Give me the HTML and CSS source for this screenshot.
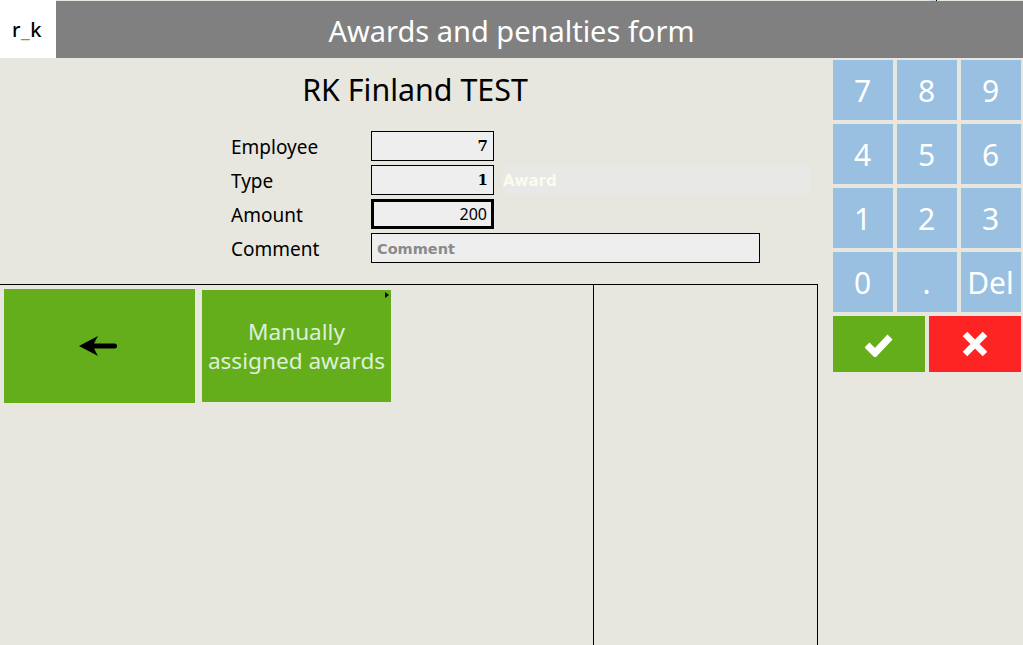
FILE: index.html
```html
<!DOCTYPE html>
<html lang="en">
<head>
<meta charset="utf-8">
<title>Awards and penalties form</title>
<link rel="stylesheet" href="styles.css">
</head>
<body>
<header class="topbar">
  <div class="logo">r<span class="logo-bar">_</span>k</div>
  <h1 class="topbar-title">Awards and penalties form</h1>
  <span class="top-glitch"></span>
</header>
<div class="main">
  <div class="content">
    <h2 class="company">RK Finland TEST</h2>
    <form class="form">
      <label class="form-label">Employee</label>
      <div class="field field-short field-bold">7</div>
      <label class="form-label">Type</label>
      <div class="type-row">
        <div class="field field-short field-bold">1</div>
        <div class="type-name">Award</div>
      </div>
      <label class="form-label">Amount</label>
      <div class="field field-short field-active">200</div>
      <label class="form-label">Comment</label>
      <div class="field field-long">Comment</div>
    </form>
    <div class="panels">
      <div class="panel-left">
        <button type="button" class="tile tile-back" aria-label="Back">
          <svg width="40" height="20" viewBox="0 0 40 20"><path d="M1 10 L20 0 L16 7.5 H36.5 a2.5 2.5 0 0 1 0 5 H16 L20 20 Z" fill="#000"/></svg>
        </button>
        <button type="button" class="tile tile-folder">Manually<br>assigned awards<span class="tile-mark"></span></button>
      </div>
      <div class="panel-right"></div>
    </div>
  </div>
  <aside class="side">
    <div class="keypad">
      <button type="button" class="key">7</button>
      <button type="button" class="key">8</button>
      <button type="button" class="key">9</button>
      <button type="button" class="key">4</button>
      <button type="button" class="key">5</button>
      <button type="button" class="key">6</button>
      <button type="button" class="key">1</button>
      <button type="button" class="key">2</button>
      <button type="button" class="key">3</button>
      <button type="button" class="key">0</button>
      <button type="button" class="key">.</button>
      <button type="button" class="key">Del</button>
    </div>
    <div class="actions">
      <button type="button" class="action action-ok" aria-label="Confirm">
        <svg width="28" height="26" viewBox="1 0 28 26"><path d="M3 14 L11 22 L26 6" fill="none" stroke="#fff" stroke-width="7"/></svg>
      </button>
      <button type="button" class="action action-cancel" aria-label="Cancel">
        <svg width="26" height="26" viewBox="0 0 26 26"><path d="M3 3 L23 23 M23 3 L3 23" fill="none" stroke="#fff" stroke-width="6.5"/></svg>
      </button>
    </div>
  </aside>
</div>
</body>
</html>
```
FILE: styles.css
```css
* { box-sizing: border-box; }
html, body { margin: 0; padding: 0; height: 100%; }
body {
  width: 1023px;
  height: 645px;
  overflow: hidden;
  background: #e7e7df;
  font-family: "Noto Sans", "Open Sans", sans-serif;
  color: #000;
  display: flex;
  flex-direction: column;
}
.topbar { position: relative; display: flex; height: 58px; flex: none; }
.top-glitch {
  position: absolute;
  left: 929px;
  top: 0;
  width: 8px;
  height: 1px;
  background: #c4d8ea;
  border-right: 1px solid #000;
}
.logo {
  width: 56px;
  padding-right: 2px;
  background: #fff;
  font-size: 20px;
  font-weight: 500;
  letter-spacing: 0.5px;
  display: flex;
  align-items: center;
  justify-content: center;
}
.logo-bar { color: #5fae3c; }
.topbar-title {
  flex: 1;
  margin: 1px 0 0;
  padding: 2px 56px 0 0;
  background: #808080;
  color: #fff;
  font-size: 29px;
  font-weight: 400;
  display: flex;
  align-items: center;
  justify-content: center;
}
.main { flex: 1; display: flex; min-height: 0; }
.content { width: 833px; display: flex; flex-direction: column; }
.company {
  margin: 12px 0 0;
  width: 830px;
  height: 40px;
  font-size: 30.4px;
  font-weight: 400;
  line-height: 40px;
  text-align: center;
}
.form {
  margin: 21px 0 0 231px;
  display: grid;
  grid-template-columns: 140px auto;
  grid-auto-rows: 30px;
  row-gap: 4px;
  align-items: center;
  font-size: 19px;
}
.form-label { line-height: 32px; height: 30px; }
.field {
  height: 30px;
  border: 1px solid #000;
  background: #eee;
  font-size: 16px;
  line-height: 28px;
  padding: 0 5px;
  text-align: right;
}
.field-short { width: 123px; }
.field-bold { font-family: "DejaVu Serif", serif; font-weight: 700; font-size: 15px; }
.field-active { border-width: 3px; line-height: 24px; padding: 0 4px; font-family: "Noto Sans", sans-serif; }
.field-long {
  width: 389px;
  text-align: left;
  color: #8a8a8a;
  font-weight: 700;
  font-family: "DejaVu Sans", sans-serif;
  font-size: 14.5px;
  padding-left: 5px;
  line-height: 30px;
}
.type-row { display: flex; gap: 9px; }
.type-name {
  width: 307px;
  height: 30px;
  background: #e8e8e6;
  color: #fbfbef;
  font-family: "DejaVu Sans", sans-serif;
  font-weight: 700;
  font-size: 15px;
  line-height: 33px;
}
.panels {
  margin-top: 21px;
  width: 818px;
  flex: 1;
  border-top: 1px solid #000;
  display: flex;
}
.panel-left {
  width: 594px;
  border-right: 1px solid #000;
  padding: 4px 0 0 4px;
  display: flex;
  align-items: flex-start;
  gap: 7px;
}
.panel-right { flex: 1; border-right: 1px solid #000; }
.tile {
  position: relative;
  border: 0;
  padding: 0;
  background: #65ae1b;
  font-family: inherit;
  display: flex;
  align-items: center;
  justify-content: center;
}
.tile-back { width: 191px; height: 114px; padding-right: 4px; }
.tile-folder {
  display: block;
  width: 189px;
  height: 112px;
  margin-top: 1px;
  color: #ddeedd;
  font-size: 22.6px;
  line-height: 29px;
  text-align: center;
}
.tile-mark {
  position: absolute;
  top: 2px;
  right: 2px;
  border-left: 4px solid #000;
  border-top: 3px solid transparent;
  border-bottom: 3px solid transparent;
}
.side { flex: 1; padding-top: 2px; }
.keypad {
  display: grid;
  grid-template-columns: repeat(3, 60px);
  grid-auto-rows: 60px;
  gap: 4px;
}
.key {
  border: 0;
  padding: 0 1px 0 0;
  background: #99bfe1;
  color: #fff;
  font-family: inherit;
  font-size: 30px;
}
.actions { display: flex; gap: 4px; margin-top: 4px; }
.action {
  width: 92px;
  height: 56px;
  border: 0;
  padding: 0;
  display: flex;
  align-items: center;
  justify-content: center;
}
.action-ok { background: #65ae1b; }
.action-cancel { background: #ff2424; }
```
